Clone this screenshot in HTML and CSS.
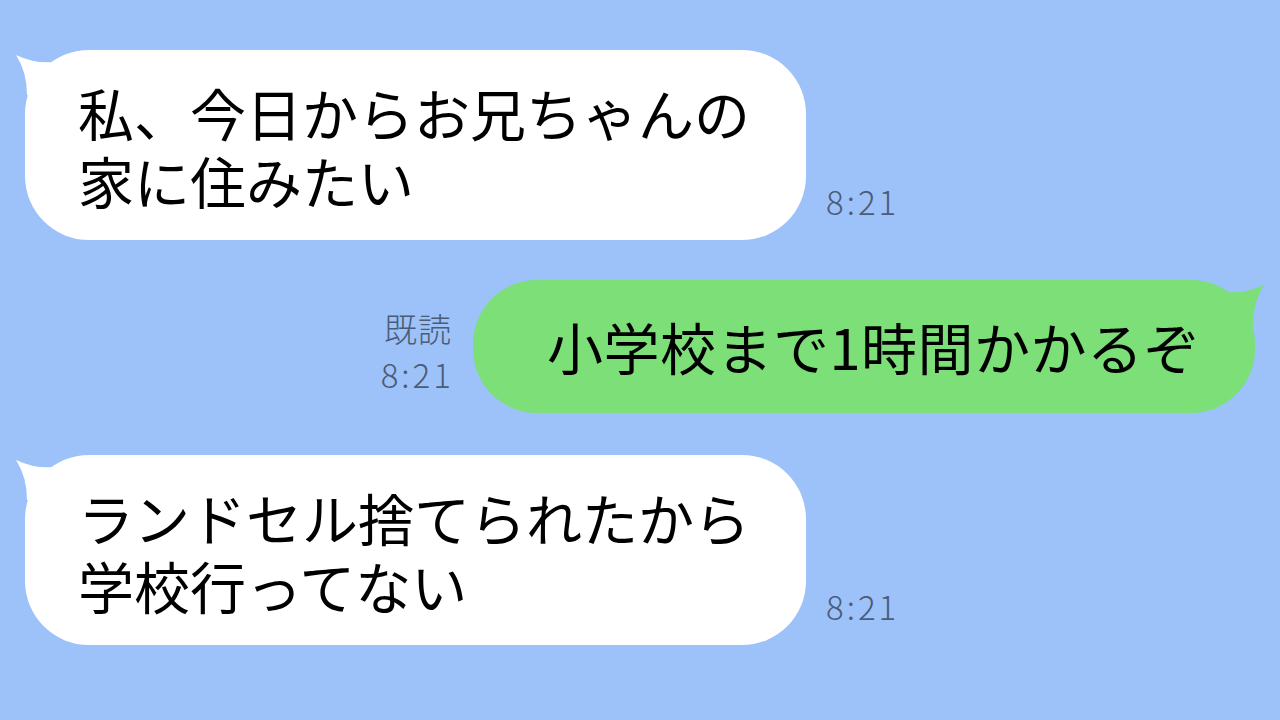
FILE: index.html
```html
<!DOCTYPE html>
<html lang="ja">
<head>
  <meta charset="UTF-8" />
  <meta name="viewport" content="width=device-width, initial-scale=1.0"/>
  <title>トーク</title>
  <link rel="stylesheet" href="styles.css">
</head>
<body>

  <div class="chat">

    <div class="row left">
      <div class="bubble white">
        <svg class="tail" width="40" height="45" viewBox="0 0 40 45"><path d="M1 5 Q20 14 40 12 L40 45 L12 45 Q12 22 1 5 Z" /></svg>
        私、今日からお兄ちゃんの<br>家に住みたい
      </div>
      <div class="meta">
        <span class="time">8:21</span>
      </div>
    </div>

    <div class="row right">
      <div class="meta">
        <span class="read">既読</span>
        <span class="time">8:21</span>
      </div>
      <div class="bubble green">
        <svg class="tail" width="40" height="45" viewBox="0 0 40 45"><path d="M39 5 Q20 14 0 12 L0 45 L28 45 Q28 22 39 5 Z" /></svg>
        小学校まで1時間かかるぞ
      </div>
    </div>

    <div class="row left last">
      <div class="bubble white">
        <svg class="tail" width="40" height="45" viewBox="0 0 40 45"><path d="M1 5 Q20 14 40 12 L40 45 L12 45 Q12 22 1 5 Z" /></svg>
        ランドセル捨てられたから<br>学校行ってない
      </div>
      <div class="meta">
        <span class="time">8:21</span>
      </div>
    </div>

  </div>

</body>
</html>
```

FILE: styles.css
```css
body {
  margin: 0;
  padding: 0;
  background-color: #9dc1f9;
  font-family: "Noto Sans CJK JP", "Noto Sans", sans-serif;
  width: 1280px;
  height: 720px;
  overflow: hidden;
}

.chat {
  display: flex;
  flex-direction: column;
  gap: 40px;
  padding: 50px 25px 0 25px;
}

.row {
  display: flex;
  align-items: flex-end;
  gap: 20px;
}

.row.right {
  justify-content: flex-end;
  gap: 22px;
}

.row.last {
  margin-top: 2px;
}

.bubble {
  position: relative;
  font-size: 56px;
  line-height: 68px;
  color: #000;
  white-space: nowrap;
  border-radius: 64px;
}

.bubble.white {
  background-color: #fff;
  padding: 28px 56px 26px 53px;
}

.bubble.green {
  background-color: #7ddf78;
  letter-spacing: 0.5px;
  padding: 32px 55px 33px 74px;
}

.tail {
  position: absolute;
  top: 0;
}

.white .tail {
  left: -10px;
  fill: #fff;
}

.green .tail {
  right: -10px;
  fill: #7ddf78;
}

.meta {
  display: flex;
  flex-direction: column;
  align-items: flex-end;
  font-size: 33px;
  font-weight: 300;
  line-height: 46px;
  color: #4a5c78;
  margin-bottom: 16px;
}

.meta .read {
  letter-spacing: 1px;
  margin-right: -1px;
}

.meta .time {
  letter-spacing: 3px;
  margin-right: -3px;
}
```
